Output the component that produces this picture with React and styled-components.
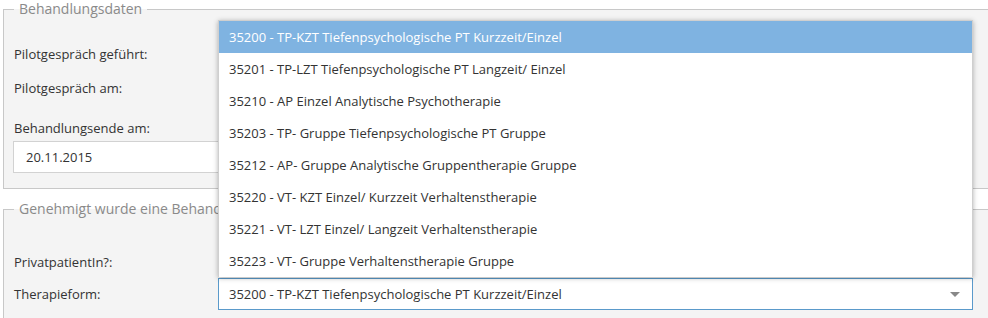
import React from "react";
import styled, { createGlobalStyle } from "styled-components";

const GlobalStyle = createGlobalStyle`
  html, body {
    margin: 0;
    padding: 0;
    background: #fff;
    overflow: hidden;
  }
  body {
    font-family: "Open Sans", "Noto Sans", sans-serif;
    font-size: 13px;
    color: #333;
  }
`;

const Page = styled.div`
  width: 1000px;
  padding-left: 3px;
`;

const Fieldset = styled.fieldset`
  margin: 0 0 ${({ gap }) => gap || 0}px 0;
  padding: 0 10px ${({ bottom }) => bottom || 0}px 10px;
  border: 1px solid #c8c8c8;
  background: #f4f4f4;
  min-width: 0;
`;

const Legend = styled.legend`
  padding: 0 5px;
  font-size: 14px;
  line-height: 18px;
  color: #8a8a8a;
`;

const Body = styled.div`
  padding-top: ${({ top }) => top}px;
`;

const Row = styled.div`
  display: grid;
  grid-template-columns: 204px 755px;
  align-items: center;
  height: ${({ h }) => h || 34}px;
`;

const Label = styled.label`
  line-height: 20px;
`;

const Stacked = styled.div`
  display: flex;
  flex-direction: column;
  gap: 3px;
  margin-top: 13px;
`;

const TextInput = styled.div`
  box-sizing: border-box;
  width: 400px;
  height: 32px;
  border: 1px solid #d2d2d2;
  background: #fff;
  padding: 0 12px;
  display: flex;
  align-items: center;
  margin-left: -1px;
`;

const SelectWrap = styled.div`
  position: relative;
`;

const Select = styled.div`
  box-sizing: border-box;
  height: 32px;
  border: 1px solid #5a9acb;
  background: #fff;
  padding: 0 10px;
  display: flex;
  align-items: center;
  justify-content: space-between;
`;

const Arrow = styled.span`
  width: 0;
  height: 0;
  border-left: 5px solid transparent;
  border-right: 5px solid transparent;
  border-top: 5px solid #888;
  margin-right: 2px;
`;

const Dropdown = styled.ul`
  position: absolute;
  left: 0;
  right: 0;
  bottom: calc(100% + 1px);
  margin: 0;
  padding: 0;
  list-style: none;
  background: #fff;
  border: 1px solid #cfcfcf;
  border-bottom: none;
  box-shadow: 0 1px 5px rgba(0, 0, 0, 0.3);
  z-index: 10;
`;

const Option = styled.li`
  height: 32px;
  line-height: 32px;
  padding-left: 10px;
  background: ${({ active }) => (active ? "#7fb3e1" : "#fff")};
  color: ${({ active }) => (active ? "#fff" : "#333")};
`;

const NextField = styled.div`
  height: 10px;
  border: 1px solid #d2d2d2;
  border-bottom: none;
  background: #fff;
  margin-top: 6px;
`;

const options = [
  "35200 - TP-KZT Tiefenpsychologische PT Kurzzeit/Einzel",
  "35201 - TP-LZT Tiefenpsychologische PT Langzeit/ Einzel",
  "35210 - AP Einzel Analytische Psychotherapie",
  "35203 - TP- Gruppe Tiefenpsychologische PT Gruppe",
  "35212 - AP- Gruppe Analytische Gruppentherapie Gruppe",
  "35220 - VT- KZT Einzel/ Kurzzeit Verhaltenstherapie",
  "35221 - VT- LZT Einzel/ Langzeit Verhaltenstherapie",
  "35223 - VT- Gruppe Verhaltenstherapie Gruppe",
];

export default function App() {
  return (
    <>
      <GlobalStyle />
      <Page>
        <Fieldset gap={11} bottom={15}>
          <Legend>Behandlungsdaten</Legend>
          <Body top={19}>
            <Row>
              <Label>Pilotgespräch geführt:</Label>
            </Row>
            <Row>
              <Label>Pilotgespräch am:</Label>
            </Row>
            <Stacked>
              <Label>Behandlungsende am:</Label>
              <TextInput>20.11.2015</TextInput>
            </Stacked>
          </Body>
        </Fieldset>
        <Fieldset>
          <Legend>Genehmigt wurde eine Behandlung</Legend>
          <Body top={27}>
            <Row h={33}>
              <Label>PrivatpatientIn?:</Label>
            </Row>
            <Row h={32}>
              <Label>Therapieform:</Label>
              <SelectWrap>
                <Dropdown>
                  {options.map((o, i) => (
                    <Option key={o} active={i === 0}>{o}</Option>
                  ))}
                </Dropdown>
                <Select>
                  <span>{options[0]}</span>
                  <Arrow />
                </Select>
              </SelectWrap>
            </Row>
            <Row>
              <span />
              <NextField />
            </Row>
          </Body>
        </Fieldset>
      </Page>
    </>
  );
}
